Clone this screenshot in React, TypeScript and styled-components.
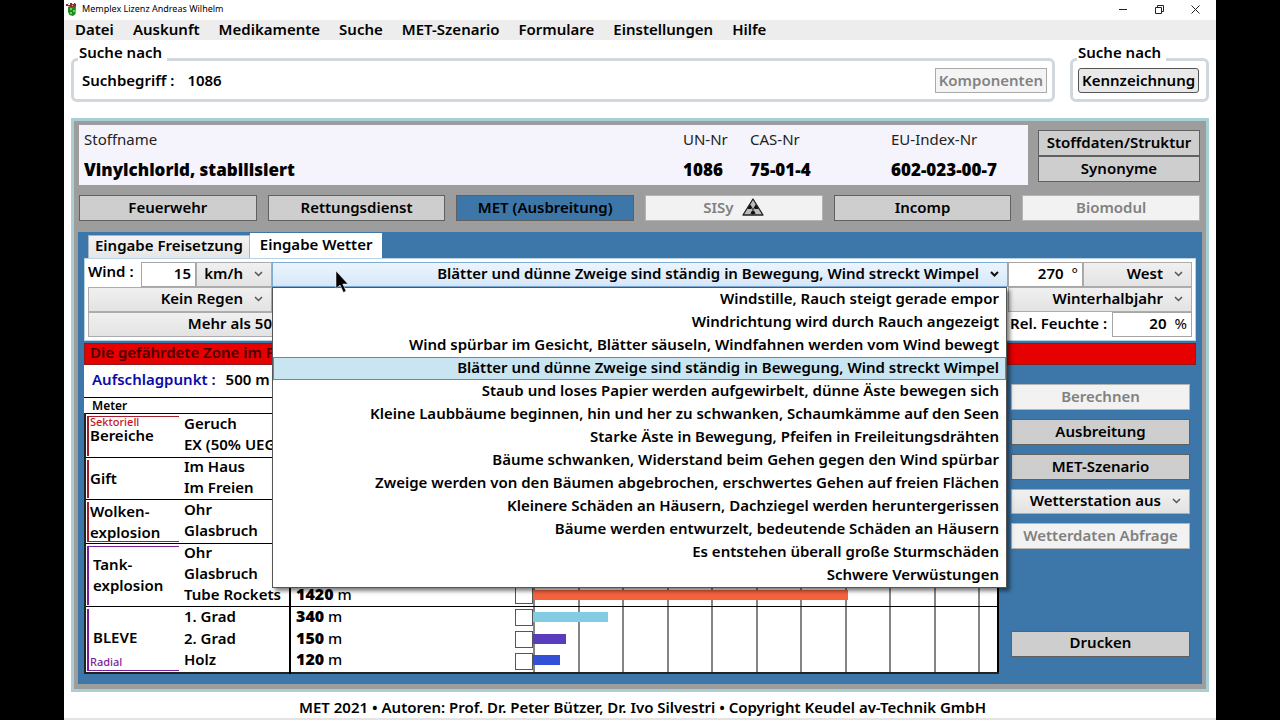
import React from "react";
import styled, { createGlobalStyle, css } from "styled-components";

const GlobalStyle = createGlobalStyle`
  *, *::before, *::after { box-sizing: border-box; }
  body {
    margin: 0;
    background: #000;
    color: #000;
    font-family: "Noto Sans", "Open Sans", sans-serif;
    font-size: 15px;
    font-weight: 600;
    line-height: 20px;
  }
  button, input, select { font: inherit; color: inherit; margin: 0; border-radius: 0; }
`;

const Window = styled.div`
  display: flex;
  flex-direction: column;
  min-height: 100vh;
  margin: 0 5%;
  background: #fff;
`;

const TitleBar = styled.header`
  display: flex;
  align-items: center;
  height: 20px;
  padding: 0 9px 2px 2px;
  gap: 5px;
`;

const Title = styled.h1`
  flex: 1;
  margin: 0;
  font-size: 9px;
  font-weight: 400;
  line-height: 18px;
`;

const WindowButtons = styled.div`
  display: flex;
  gap: 12px;
`;

const WindowButton = styled.button`
  display: flex;
  align-items: center;
  justify-content: center;
  width: 24px;
  height: 17px;
  padding: 0;
  border: 0;
  background: none;
`;

const MenuBar = styled.nav`
  display: flex;
  gap: 19px;
  height: 20px;
  padding: 0 11px;
  background: #ededed;
`;

const MenuLink = styled.a`
  color: inherit;
  text-decoration: none;
  line-height: 18px;
`;

const SearchRow = styled.div`
  display: flex;
  gap: 15px;
  padding: 2px 7px 0;
`;

const SearchBox = styled.fieldset<{ $grow?: boolean }>`
  flex: ${(p) => (p.$grow ? "1 1 auto" : "0 0 139px")};
  min-width: 0;
  margin: 0;
  padding: 0 5px 6px;
  border: 3px solid #d0d8de;
  border-radius: 6px;
`;

const Legend = styled.legend`
  margin-left: -1px;
  padding: 0 5px 14px 1px;
  line-height: 20px;
`;

const SearchContent = styled.div`
  display: flex;
  align-items: center;
  justify-content: space-between;
  margin-top: -8px;
`;

const SearchLabel = styled.label`
  display: flex;
  gap: 13px;
  padding: 0 0 2px 3px;
`;

const SearchInput = styled.input`
  width: 200px;
  padding: 0;
  border: 0;
  background: transparent;
  outline: none;
`;

const SearchButton = styled.button<{ $round?: boolean }>`
  height: 25px;
  padding: 0 3px 2px;
  border: 1px solid ${(p) => (p.$round ? "#555" : "#aaa")};
  border-radius: ${(p) => (p.$round ? "3px" : "0")};
  background: ${(p) => (p.$round ? "#e9e9e9" : "#f4f4f4")};
  line-height: 20px;
  &:disabled { color: #838383; }
`;

const Main = styled.main`
  margin: 16px 7px 0;
  padding: 4px 4px 5px;
  border: 3px solid #a9ced4;
  background: #9d9d9d;
`;

const SubstanceRow = styled.section`
  display: flex;
  gap: 10px;
  padding: 0 2px 0 1px;
`;

const Substance = styled.dl`
  display: grid;
  flex: 1;
  grid-template-columns: 1fr 67px 141px 137px;
  margin: 0;
  padding: 0 0 0 5px;
  height: 60px;
  background: #f5f4fd;
`;

const SubstanceField = styled.div`
  padding-top: 4px;
`;

const FieldName = styled.dt`
  font-weight: 400;
  color: #222;
`;

const FieldValue = styled.dd`
  margin: 11px 0 0;
  font-family: "Open Sans", "Noto Sans", sans-serif;
  font-size: 17px;
  font-weight: 800;
  white-space: nowrap;
`;

const SubstanceLinks = styled.div`
  display: flex;
  flex-direction: column;
  width: 162px;
  padding-top: 5px;
`;

const PlainButton = styled.button<{ $active?: boolean }>`
  display: flex;
  align-items: center;
  justify-content: center;
  gap: 9px;
  width: 100%;
  height: 26px;
  padding: 0 0 3px;
  border: 1px solid #606060;
  background: ${(p) => (p.$active ? "#3d77a9" : "#cecece")};
  line-height: 20px;
  white-space: nowrap;
  &:disabled { color: #808080; background: #f2f2f2; border-color: #b4b4b4; }
`;

const ModuleNav = styled.nav`
  display: grid;
  grid-template-columns: repeat(6, 1fr);
  gap: 11px;
  padding: 10px 2px 11px 1px;
`;

const BluePanel = styled.section`
  padding: 1px 6px 10px;
  background: #3d77a9;
`;

const Tabs = styled.div`
  display: flex;
  align-items: flex-end;
  padding-left: 4px;
`;

const Tab = styled.button<{ $active?: boolean }>`
  height: ${(p) => (p.$active ? "25px" : "23px")};
  padding: 0 ${(p) => (p.$active ? "9px" : "6px")} 3px;
  border: ${(p) => (p.$active ? "1px solid #fff" : "1px solid #a9b8c4")};
  border-bottom: 0;
  background: ${(p) => (p.$active ? "#fff" : "linear-gradient(#f3f3f3, #e6e6e6)")};
  line-height: 19px;
`;

const Weather = styled.div`
  display: grid;
  grid-template-columns: 184px 1fr 184px;
  padding: 3px;
  border: 1px solid #b8d4e4;
  background: #fff;
`;

const WeatherColumn = styled.div`
  display: grid;
  grid-template-columns: minmax(0, 1fr);
  grid-template-rows: repeat(3, 25px);
`;

const FieldRow = styled.div`
  display: flex;
`;

const FieldLabel = styled.label<{ $low?: boolean }>`
  flex: 1;
  padding: ${(p) => (p.$low ? "2px 0 0 2px" : "0")};
  line-height: 18px;
  white-space: nowrap;
`;

const NumberField = styled.span<{ $width: number }>`
  display: flex;
  align-items: center;
  gap: 8px;
  width: ${(p) => p.$width}px;
  padding: 0 4px 3px;
  border: 1px solid #a6a6a6;
  background: #fff;
`;

const NumberInput = styled.input`
  flex: 1;
  width: 0;
  padding: 0;
  border: 0;
  background: transparent;
  text-align: right;
  outline: none;
`;

const Unit = styled.span`
  font-weight: 400;
`;

const SelectFrame = styled.span<{ $width?: number; $open?: boolean }>`
  position: relative;
  display: flex;
  align-items: center;
  height: 25px;
  width: ${(p) => (p.$width ? `${p.$width}px` : "100%")};
  border: 1px solid ${(p) => (p.$open ? "#7eaad6" : "#acacac")};
  background: ${(p) => (p.$open ? "linear-gradient(#ecf4fc, #d6e8fa)" : "linear-gradient(#f0f0f0, #e3e3e3)")};
`;

const Select = styled.select`
  width: 100%;
  height: 100%;
  padding: 0 28px 3px 4px;
  border: 0;
  background: transparent;
  appearance: none;
  text-align: right;
  text-align-last: right;
  outline: none;
`;

const Arrow = styled.svg`
  position: absolute;
  right: 8px;
  top: 7px;
  pointer-events: none;
`;

const Pointer = styled.svg`
  position: absolute;
  left: 62px;
  top: 7px;
  z-index: 3;
  pointer-events: none;
`;

const Options = styled.ul`
  position: absolute;
  z-index: 2;
  top: 24px;
  left: -1px;
  right: 0;
  margin: 0;
  padding: 0;
  border: 1px solid #555;
  background: #fff;
  box-shadow: 3px 3px 4px rgba(0, 0, 0, 0.5);
  list-style: none;
`;

const Option = styled.li<{ $selected?: boolean }>`
  height: 23px;
  padding: 0 6px;
  border: 1px solid ${(p) => (p.$selected ? "#3a9cc4" : "transparent")};
  background: ${(p) => (p.$selected ? "#c9e5f2" : "transparent")};
  text-align: right;
  line-height: 19px;
  white-space: nowrap;
`;

const Warning = styled.div`
  height: 22px;
  margin-top: 2px;
  padding-left: 5px;
  overflow: hidden;
  border: 1px solid #8c1a1a;
  background: #e60000;
  color: #480000;
  line-height: 16px;
  white-space: nowrap;
`;

const Lower = styled.div`
  display: flex;
  gap: 12px;
  padding-right: 6px;
`;

const Results = styled.div`
  flex: 1;
  background: #fff;
`;

const Impact = styled.p`
  display: flex;
  gap: 10px;
  height: 33px;
  margin: 0;
  padding: 4px 8px;
  border-bottom: 1px solid #000;
`;

const ImpactLabel = styled.span`
  color: #0a0aa8;
`;

const ScaleCaption = styled.caption`
  height: 15px;
  padding-left: 8px;
  font-size: 12px;
  line-height: 15px;
  text-align: left;
`;

const ZoneTable = styled.table`
  width: 100%;
  table-layout: fixed;
  border-collapse: collapse;
  border-bottom: 2px solid #222;
  border-left: 2px solid #222;
  border-right: 2px solid #000;
`;

const ZoneRow = styled.tr<{ $first?: boolean; $height: number }>`
  height: ${(p) => p.$height}px;
  ${(p) => p.$first && css`border-top: 1px solid #000;`}
`;

const Category = styled.th<{ $color: string; $edge?: "top" | "bottom"; $align: string }>`
  position: relative;
  padding: ${(p) => (p.$align === "top" ? "2px" : "0")} 0 ${(p) => (p.$align === "bottom" ? "4px" : "0")} ${(p) => (p.$color === "#7a1f9c" ? "7px" : "4px")};
  font-weight: 600;
  text-align: left;
  vertical-align: ${(p) => p.$align};
  &::before {
    content: "";
    position: absolute;
    inset: 2px 5px 1px 1px;
    border-left: 2px solid ${(p) => p.$color};
    ${(p) => p.$edge && css`border-${p.$edge}: 1px solid ${p.$color};`}
  }
`;

const CategoryName = styled.span<{ $tight?: boolean; $raised?: boolean }>`
  display: block;
  line-height: ${(p) => (p.$tight ? "14px" : "21px")};
  margin-bottom: ${(p) => (p.$raised ? "8px" : "0")};
`;

const Tag = styled.span<{ $color: string; $outdent?: boolean }>`
  display: block;
  margin-left: ${(p) => (p.$outdent ? "-3px" : "0")};
  color: ${(p) => p.$color};
  font-size: 11px;
  font-weight: 500;
  line-height: 12px;
`;

const Effect = styled.td`
  padding: 0 0 3px;
  line-height: 17px;
  white-space: nowrap;
`;

const Distance = styled.td`
  padding: 0 0 3px 5px;
  border-left: 2px solid #000;
  font-weight: 500;
  line-height: 17px;
`;

const DistanceValue = styled.strong`
  font-family: "Open Sans", "Noto Sans", sans-serif;
  font-size: 16px;
  font-weight: 800;
`;

const CheckCell = styled.td`
  padding: 0;
  line-height: 0;
  vertical-align: middle;
`;

const Check = styled.input`
  width: 18px;
  height: 17px;
  margin: 0;
  border: 1px solid #555;
  background: #fff;
  appearance: none;
`;

const ChartCell = styled.td`
  padding: 0 0 2px;
  background: repeating-linear-gradient(90deg, #858585 0 2px, transparent 2px 9.6%);
`;

const Bar = styled.div<{ $color: string }>`
  height: 10px;
  background: ${(p) => p.$color};
`;

const Actions = styled.aside`
  display: flex;
  flex-direction: column;
  gap: 9px;
  width: 179px;
  padding: 19px 0 17px;
`;

const Spacer = styled.div`
  flex: 1;
`;

const Footer = styled.footer`
  flex: 1;
  padding: 5px 0 0 5px;
  border-bottom: 2px solid #e4e4e4;
  text-align: center;
`;

const menu = ["Datei", "Auskunft", "Medikamente", "Suche", "MET-Szenario", "Formulare", "Einstellungen", "Hilfe"];

const windLevels = [
  "Windstille, Rauch steigt gerade empor",
  "Windrichtung wird durch Rauch angezeigt",
  "Wind spürbar im Gesicht, Blätter säuseln, Windfahnen werden vom Wind bewegt",
  "Blätter und dünne Zweige sind ständig in Bewegung, Wind streckt Wimpel",
  "Staub und loses Papier werden aufgewirbelt, dünne Äste bewegen sich",
  "Kleine Laubbäume beginnen, hin und her zu schwanken, Schaumkämme auf den Seen",
  "Starke Äste in Bewegung, Pfeifen in Freileitungsdrähten",
  "Bäume schwanken, Widerstand beim Gehen gegen den Wind spürbar",
  "Zweige werden von den Bäumen abgebrochen, erschwertes Gehen auf freien Flächen",
  "Kleinere Schäden an Häusern, Dachziegel werden heruntergerissen",
  "Bäume werden entwurzelt, bedeutende Schäden an Häusern",
  "Es entstehen überall große Sturmschäden",
  "Schwere Verwüstungen",
];
const currentWind = windLevels[3];

const RED = "#a3202c";
const PURPLE = "#7a1f9c";
const SCALE_METRES = 2095;

type Row = { effect: string; metres?: number; color?: string };
type Group = {
  name: string[];
  color: string;
  edge?: "top" | "bottom";
  align: string;
  tag?: string;
  height: number;
  rows: Row[];
};

const groups: Group[] = [
  { name: ["Bereiche"], color: RED, edge: "top", align: "top", tag: "Sektoriell", height: 22, rows: [{ effect: "Geruch" }, { effect: "EX (50% UEG)" }] },
  { name: ["Gift"], color: RED, align: "middle", height: 21, rows: [{ effect: "Im Haus" }, { effect: "Im Freien" }] },
  { name: ["Wolken-", "explosion"], color: RED, edge: "bottom", align: "middle", height: 22, rows: [{ effect: "Ohr" }, { effect: "Glasbruch" }] },
  {
    name: ["Tank-", "explosion"], color: PURPLE, edge: "top", align: "middle", height: 21,
    rows: [{ effect: "Ohr" }, { effect: "Glasbruch" }, { effect: "Tube Rockets", metres: 1420, color: "#f4623e" }],
  },
  {
    name: ["BLEVE"], color: PURPLE, edge: "bottom", align: "bottom", tag: "Radial", height: 22,
    rows: [
      { effect: "1. Grad", metres: 340, color: "#82cde4" },
      { effect: "2. Grad", metres: 150, color: "#5a3dbd" },
      { effect: "Holz", metres: 120, color: "#3350d6" },
    ],
  },
];

function Dropdown({ label, value, width, open, options, children }: {
  label: string; value: string; width?: number; open?: boolean; options?: string[]; children?: React.ReactNode;
}) {
  return (
    <SelectFrame $width={width} $open={open}>
      <Select aria-label={label} defaultValue={value}>
        {(options ?? [value]).map((o) => <option key={o}>{o}</option>)}
      </Select>
      <Arrow width="9" height="8" viewBox="0 0 9 8" aria-hidden="true">
        <path d="M1 2 L4.500 5.500 L8 2" fill="none" stroke={open ? "#111" : "#555"} strokeWidth={open ? 2 : 1.500} />
      </Arrow>
      {children}
    </SelectFrame>
  );
}

function AppIcon() {
  return (
    <svg width="11" height="14" viewBox="0 0 11 14" aria-hidden="true">
      <path d="M2 5 L10 4 L9.500 12 L7 14 L3.500 13 L2 10Z" fill="#1f8a24" />
      <path d="M4 6h2v2h-2zM7 8h2v2h-2zM4 10h2v2h-2z" fill="#5fe04a" />
      <path d="M0 2h2v1h2v-2h2v1h2v-1h2v3l-2 1h-4l-2-1h-2z" fill="#8c2f2a" />
      <path d="M2 1h1v1h-1zM6 3h1v1h-1zM9 1h1v1h-1z" fill="#e9b9a8" />
    </svg>
  );
}

function RadiationIcon() {
  return (
    <svg width="22" height="18" viewBox="0 0 22 18" aria-hidden="true">
      <path d="M11 1 L21 17 H1Z" fill="#bcbcbc" stroke="#222" strokeWidth="1.300" strokeLinejoin="round" />
      <path d="M11 11 L8.300 15.600 A5.300 5.300 0 0 0 13.700 15.600Z M11 11 L5.700 11 A5.300 5.300 0 0 1 8.300 6.400Z M11 11 L16.300 11 A5.300 5.300 0 0 0 13.700 6.400Z" fill="#111" />
      <circle cx="11" cy="11" r="1.300" fill="#111" stroke="#bcbcbc" strokeWidth="0.700" />
    </svg>
  );
}

export default function App() {
  return (
    <>
      <GlobalStyle />
      <Window>
        <TitleBar>
          <AppIcon />
          <Title>Memplex Lizenz Andreas Wilhelm</Title>
          <WindowButtons>
            <WindowButton aria-label="Minimieren">
              <svg width="9" height="9" viewBox="0 0 9 9"><path d="M0 4.500H8" stroke="#222" /></svg>
            </WindowButton>
            <WindowButton aria-label="Wiederherstellen">
              <svg width="9" height="9" viewBox="0 0 9 9"><path d="M.5 2.500h6v6h-6zM2.500 2.500v-2h6v6h-2" fill="none" stroke="#222" /></svg>
            </WindowButton>
            <WindowButton aria-label="Schließen">
              <svg width="9" height="9" viewBox="0 0 9 9"><path d="M.5.5l8 8M8.500.5l-8 8" stroke="#222" /></svg>
            </WindowButton>
          </WindowButtons>
        </TitleBar>

        <MenuBar>
          {menu.map((m) => <MenuLink key={m} href="#">{m}</MenuLink>)}
        </MenuBar>

        <SearchRow>
          <SearchBox $grow>
            <Legend>Suche nach</Legend>
            <SearchContent>
              <SearchLabel>Suchbegriff : <SearchInput type="text" defaultValue="1086" /></SearchLabel>
              <SearchButton disabled>Komponenten</SearchButton>
            </SearchContent>
          </SearchBox>
          <SearchBox>
            <Legend>Suche nach</Legend>
            <SearchContent>
              <SearchButton $round>Kennzeichnung</SearchButton>
            </SearchContent>
          </SearchBox>
        </SearchRow>

        <Main>
          <SubstanceRow>
            <Substance>
              <SubstanceField><FieldName>Stoffname</FieldName><FieldValue>Vinylchlorid, stabilisiert</FieldValue></SubstanceField>
              <SubstanceField><FieldName>UN-Nr</FieldName><FieldValue>1086</FieldValue></SubstanceField>
              <SubstanceField><FieldName>CAS-Nr</FieldName><FieldValue>75-01-4</FieldValue></SubstanceField>
              <SubstanceField><FieldName>EU-Index-Nr</FieldName><FieldValue>602-023-00-7</FieldValue></SubstanceField>
            </Substance>
            <SubstanceLinks>
              <PlainButton>Stoffdaten/Struktur</PlainButton>
              <PlainButton>Synonyme</PlainButton>
            </SubstanceLinks>
          </SubstanceRow>

          <ModuleNav>
            <PlainButton>Feuerwehr</PlainButton>
            <PlainButton>Rettungsdienst</PlainButton>
            <PlainButton $active>MET (Ausbreitung)</PlainButton>
            <PlainButton disabled>SISy <RadiationIcon /></PlainButton>
            <PlainButton>Incomp</PlainButton>
            <PlainButton disabled>Biomodul</PlainButton>
          </ModuleNav>

          <BluePanel>
            <Tabs role="tablist">
              <Tab role="tab" aria-selected={false}>Eingabe Freisetzung</Tab>
              <Tab role="tab" aria-selected $active>Eingabe Wetter</Tab>
            </Tabs>
            <Weather>
              <WeatherColumn>
                <FieldRow>
                  <FieldLabel htmlFor="wind">Wind :</FieldLabel>
                  <NumberField $width={55}><NumberInput id="wind" defaultValue="15" /></NumberField>
                  <Dropdown label="Einheit" value="km/h" width={76} />
                </FieldRow>
                <Dropdown label="Niederschlag" value="Kein Regen" />
                <Dropdown label="Bewölkung" value="Mehr als 50" width={213} />
              </WeatherColumn>
              <WeatherColumn>
                <Dropdown label="Windstärke" value={currentWind} options={windLevels} open>
                  <Options role="listbox" aria-label="Windstärke">
                    {windLevels.map((w) => (
                      <Option key={w} role="option" aria-selected={w === currentWind} $selected={w === currentWind}>{w}</Option>
                    ))}
                  </Options>
                  <Pointer width="14" height="24" viewBox="0 0 14 24" aria-hidden="true">
                    <path d="M1 1 V18.500 L5 15 L8.500 22.500 L11 21 L7.800 14 H13Z" fill="#000" stroke="#fff" strokeWidth="0.500" />
                  </Pointer>
                </Dropdown>
              </WeatherColumn>
              <WeatherColumn>
                <FieldRow>
                  <NumberField $width={75}><NumberInput aria-label="Windrichtung in Grad" defaultValue="270" /><Unit>°</Unit></NumberField>
                  <Dropdown label="Windrichtung" value="West" width={109} />
                </FieldRow>
                <Dropdown label="Jahreszeit" value="Winterhalbjahr" />
                <FieldRow>
                  <FieldLabel htmlFor="humidity" $low>Rel. Feuchte :</FieldLabel>
                  <NumberField $width={80}><NumberInput id="humidity" defaultValue="20" /><Unit>%</Unit></NumberField>
                </FieldRow>
              </WeatherColumn>
            </Weather>
            <Warning role="alert">Die gefährdete Zone im Freien</Warning>
            <Lower>
              <Results>
                <Impact><ImpactLabel>Aufschlagpunkt :</ImpactLabel><span>500 m</span></Impact>
                <ZoneTable>
                  <ScaleCaption>Meter</ScaleCaption>
                  <colgroup>
                    <col style={{ width: 99 }} /><col style={{ width: 106 }} /><col style={{ width: 225 }} /><col style={{ width: 18 }} /><col />
                  </colgroup>
                  <tbody>
                    {groups.map((g, gi) => g.rows.map((r, i) => (
                      <ZoneRow key={`${gi}-${i}`} $first={i === 0} $height={g.height}>
                        {i === 0 && (
                          <Category scope="rowgroup" rowSpan={g.rows.length} $color={g.color} $edge={g.edge} $align={g.align}>
                            {g.tag && g.edge === "top" && <Tag $color="#c0182a">{g.tag}</Tag>}
                            {g.name.map((n) => (
                              <CategoryName key={n} $tight={!!g.tag && g.edge === "top"} $raised={!!g.tag && g.edge === "bottom"}>{n}</CategoryName>
                            ))}
                            {g.tag && g.edge === "bottom" && <Tag $color={PURPLE} $outdent>{g.tag}</Tag>}
                          </Category>
                        )}
                        <Effect>{r.effect}</Effect>
                        <Distance>{r.metres && <><DistanceValue>{r.metres}</DistanceValue> m</>}</Distance>
                        <CheckCell><Check type="checkbox" aria-label={r.effect} /></CheckCell>
                        <ChartCell>
                          {r.metres && <Bar $color={r.color!} style={{ width: `${(r.metres / SCALE_METRES) * 100}%` }} />}
                        </ChartCell>
                      </ZoneRow>
                    )))}
                  </tbody>
                </ZoneTable>
              </Results>
              <Actions>
                <PlainButton disabled>Berechnen</PlainButton>
                <PlainButton>Ausbreitung</PlainButton>
                <PlainButton>MET-Szenario</PlainButton>
                <Dropdown label="Wetterstation" value="Wetterstation aus" />
                <PlainButton disabled>Wetterdaten Abfrage</PlainButton>
                <Spacer />
                <PlainButton>Drucken</PlainButton>
              </Actions>
            </Lower>
          </BluePanel>
        </Main>

        <Footer>MET 2021 • Autoren: Prof. Dr. Peter Bützer, Dr. Ivo Silvestri • Copyright Keudel av-Technik GmbH</Footer>
      </Window>
    </>
  );
}
